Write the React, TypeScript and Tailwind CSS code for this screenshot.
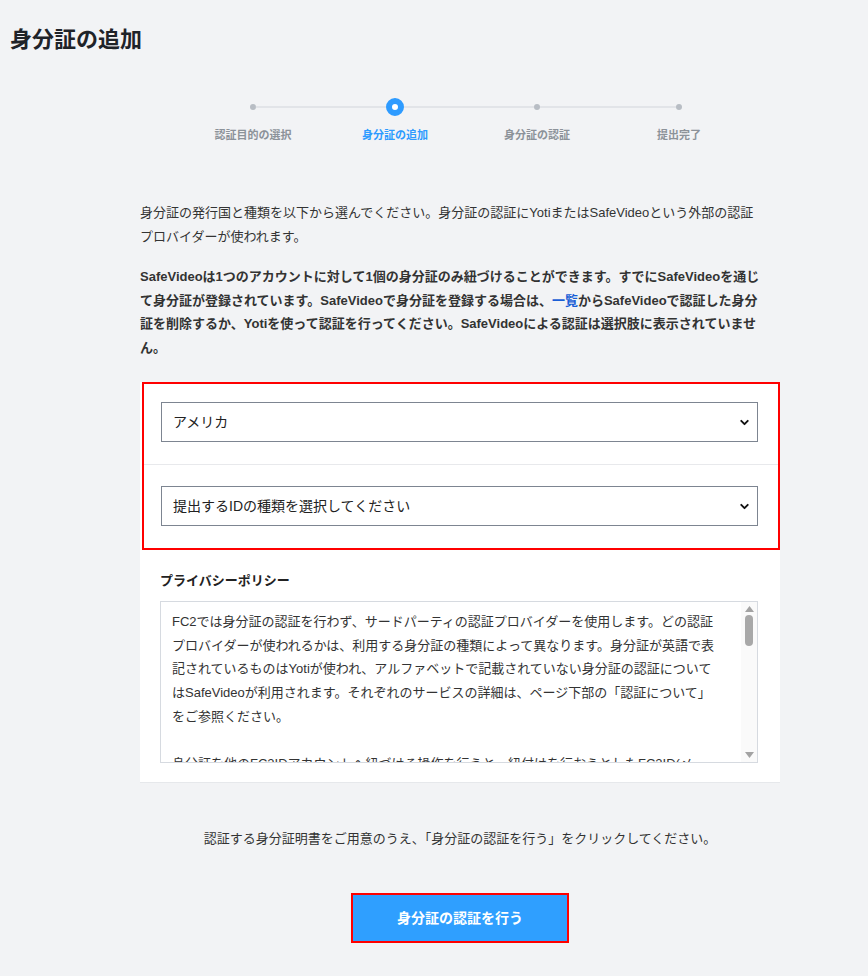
import { ChevronDown } from "lucide-react";

const FONT = { fontFamily: '"Liberation Sans", "Noto Sans CJK JP", sans-serif' };

const steps = [
  { label: "認証目的の選択", active: false },
  { label: "身分証の追加", active: true },
  { label: "身分証の認証", active: false },
  { label: "提出完了", active: false },
];

const Stepper = () => (
  <div className="flex ml-[42px]">
    {steps.map((s, i) => (
      <div key={s.label} className="w-[142px] flex flex-col items-center">
        <div className="w-full h-[18px] flex items-center">
          <div className={`flex-1 h-[2px] ${i === 0 ? "bg-transparent" : "bg-[#e2e4e8]"}`} />
          {s.active ? (
            <div className="w-[18px] h-[18px] rounded-full border-[6px] border-[#2e9bff] bg-white" />
          ) : (
            <div className="w-[6px] h-[6px] rounded-full bg-[#b8bdc4]" />
          )}
          <div className={`flex-1 h-[2px] ${i === steps.length - 1 ? "bg-transparent" : "bg-[#e2e4e8]"}`} />
        </div>
        <p
          className={`mt-[11px] text-[11px] leading-[16px] font-bold ${
            s.active ? "text-[#2e9bff]" : "text-[#8c9299]"
          }`}
        >
          {s.label}
        </p>
      </div>
    ))}
  </div>
);

const Select = ({ value }: { value: string }) => (
  <div className="h-[40px] border border-[#7d8591] bg-white flex items-center justify-between pl-[11px] pr-[6px]">
    <span className="text-[14px] text-[#222]">{value}</span>
    <ChevronDown size={13} strokeWidth={3.5} className="text-[#111]" />
  </div>
);

const App = () => {
  return (
    <div className="min-h-[976px] bg-[#f2f3f5] text-[#333]" style={FONT}>
      {/* タイトル */}
      <h1 className="pl-[10px] pt-[25px] text-[22px] leading-[30px] font-bold text-[#1f2329]">
        身分証の追加
      </h1>

      <div className="ml-[140px] w-[640px]">
        <div className="mt-[43px]">
          <Stepper />
        </div>

        {/* 説明 */}
        <p className="mt-[58px] text-[13px] leading-[23.5px]">
          <span className="block whitespace-nowrap">
            身分証の発行国と種類を以下から選んでください。身分証の認証にYotiまたはSafeVideoという外部の認証
          </span>
          <span className="block whitespace-nowrap">プロバイダーが使われます。</span>
        </p>
        <p className="mt-[17px] text-[13px] leading-[23.5px] font-bold">
          <span className="block whitespace-nowrap">
            SafeVideoは1つのアカウントに対して1個の身分証のみ紐づけることができます。すでにSafeVideoを通じ
          </span>
          <span className="block whitespace-nowrap">
            て身分証が登録されています。SafeVideoで身分証を登録する場合は、
            <a href="#" className="text-[#1a5fd6]">一覧</a>
            からSafeVideoで認証した身分
          </span>
          <span className="block whitespace-nowrap">
            証を削除するか、Yotiを使って認証を行ってください。SafeVideoによる認証は選択肢に表示されていませ
          </span>
          <span className="block whitespace-nowrap">ん。</span>
        </p>

        {/* フォーム */}
        <div className="mt-[23px] bg-white border-b border-[#e6e8eb]">
          <div className="border-2 border-[#ff0000] ml-[2px]">
            <div className="pt-[18px] pb-[22px] pl-[17px] pr-[20px] border-b border-[#e8e9ec]">
              <Select value="アメリカ" />
            </div>
            <div className="pt-[21px] pb-[22px] pl-[17px] pr-[20px]">
              <Select value="提出するIDの種類を選択してください" />
            </div>
          </div>

          {/* プライバシーポリシー */}
          <div className="pt-[21px] pb-[19px] pl-[20px] pr-[22px]">
            <h2 className="text-[13px] leading-[20px] font-bold text-[#222]">プライバシーポリシー</h2>
            <div className="mt-[10px] h-[162px] border border-[#d6dae0] flex overflow-hidden">
              <div className="flex-1 pl-[11px] pt-[8px] text-[13px] leading-[23.7px] text-[#333] overflow-hidden">
                <span className="block whitespace-nowrap">
                  FC2では身分証の認証を行わず、サードパーティの認証プロバイダーを使用します。どの認証
                </span>
                <span className="block whitespace-nowrap">
                  プロバイダーが使われるかは、利用する身分証の種類によって異なります。身分証が英語で表
                </span>
                <span className="block whitespace-nowrap">
                  記されているものはYotiが使われ、アルファベットで記載されていない身分証の認証について
                </span>
                <span className="block whitespace-nowrap">
                  はSafeVideoが利用されます。それぞれのサービスの詳細は、ページ下部の「認証について」
                </span>
                <span className="block whitespace-nowrap">をご参照ください。</span>
                <span className="block h-[23.7px]" />
                <span className="block whitespace-nowrap">
                  身分証を他のFC2IDアカウントへ紐づける操作を行うと、紐付けを行おうとしたFC2ID(メー
                </span>
              </div>
              {/* スクロールバー */}
              <div className="w-[16px] bg-[#fafafa] flex flex-col items-center justify-between py-[4px]">
                <div className="flex flex-col items-center">
                  <svg width="9" height="6" viewBox="0 0 9 6">
                    <path d="M4.5 0 L9 6 L0 6 Z" fill="#a3a3a3" />
                  </svg>
                  <div className="mt-[3px] w-[8px] h-[31px] rounded-full bg-[#a8a8a8]" />
                </div>
                <svg width="9" height="6" viewBox="0 0 9 6">
                  <path d="M0 0 L9 0 L4.5 6 Z" fill="#a3a3a3" />
                </svg>
              </div>
            </div>
          </div>
        </div>

        <p className="mt-[46px] text-center text-[13px] leading-[20px] text-[#333]">
          認証する身分証明書をご用意のうえ、「身分証の認証を行う」をクリックしてください。
        </p>

        <div className="mt-[44px] flex justify-center">
          <button className="w-[218px] h-[50px] bg-[#2f9fff] border-2 border-[#ff0000] text-white text-[14px] font-bold">
            身分証の認証を行う
          </button>
        </div>
      </div>
    </div>
  );
};

export default App;
